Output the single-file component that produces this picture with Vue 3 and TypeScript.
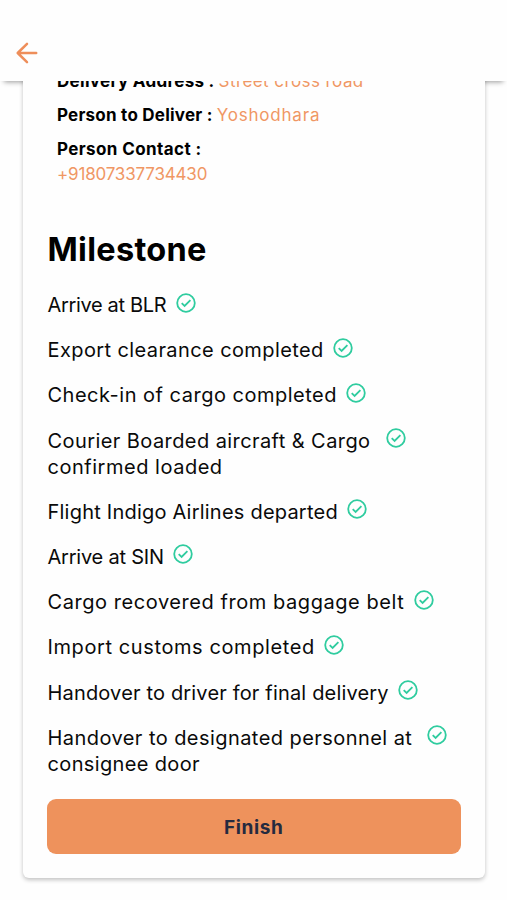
<script setup lang="ts">
interface Line {
  text: string
  tracking: number
}

interface Detail {
  label: Line
  value: Line
  stacked?: boolean
}

interface Milestone {
  lines: Line[]
  wide?: boolean
}

const details: Detail[] = [
  { label: { text: 'Delivery Address :', tracking: 0.3 }, value: { text: 'Street cross road', tracking: 0.42 } },
  { label: { text: 'Person to Deliver :', tracking: 0.23 }, value: { text: 'Yoshodhara', tracking: 0.8 } },
  {
    label: { text: 'Person Contact :', tracking: 0.4 },
    value: { text: '+91807337734430', tracking: -0.18 },
    stacked: true,
  },
]

const milestones: Milestone[] = [
  { lines: [{ text: 'Arrive at BLR', tracking: -0.34 }] },
  { lines: [{ text: 'Export clearance completed', tracking: 0.4 }] },
  { lines: [{ text: 'Check-in of cargo completed', tracking: 0.5 }] },
  {
    lines: [
      { text: 'Courier Boarded aircraft & Cargo', tracking: 0.42 },
      { text: 'confirmed loaded', tracking: 0.52 },
    ],
    wide: true,
  },
  { lines: [{ text: 'Flight Indigo Airlines departed', tracking: 0.22 }] },
  { lines: [{ text: 'Arrive at SIN', tracking: -0.22 }] },
  { lines: [{ text: 'Cargo recovered from baggage belt', tracking: 0.56 }] },
  { lines: [{ text: 'Import customs completed', tracking: 0.6 }] },
  { lines: [{ text: 'Handover to driver for final delivery', tracking: 0.17 }] },
  {
    lines: [
      { text: 'Handover to designated personnel at', tracking: 0.44 },
      { text: 'consignee door', tracking: 0.36 },
    ],
    wide: true,
  },
]
</script>

<template>
  <div class="screen">
    <header class="bar">
      <button class="back" aria-label="Back">
        <svg viewBox="0 0 24 24" width="24" height="24">
          <path d="M21.2 12H3M12 2.8L2.7 12L12 21.2" />
        </svg>
      </button>
    </header>

    <main class="scroll">
      <section class="card">
        <div class="details">
          <div v-for="d in details" :key="d.label.text" class="detail" :class="{ stacked: d.stacked }">
            <b :style="{ letterSpacing: d.label.tracking + 'px' }">{{ d.label.text }}</b>
            <span class="value" :style="{ letterSpacing: d.value.tracking + 'px' }">{{ d.value.text }}</span>
          </div>
        </div>

        <h1>Milestone</h1>

        <ul class="list">
          <li v-for="m in milestones" :key="m.lines[0].text" :class="{ wide: m.wide }">
            <div>
              <div
                v-for="line in m.lines"
                :key="line.text"
                class="line"
                :style="{ letterSpacing: line.tracking + 'px' }"
              >{{ line.text }}</div>
            </div>
            <svg class="check" viewBox="0 0 20 20" width="20" height="20">
              <circle cx="10" cy="10" r="8.8" />
              <path d="M5.7 10.2L8.6 13L14.4 7.2" />
            </svg>
          </li>
        </ul>

        <button class="finish">Finish</button>
      </section>
    </main>
  </div>
</template>

<style>
body {
  background: #fefefe;
}
</style>

<style scoped>
.screen {
  height: 900px;
  display: flex;
  flex-direction: column;
  overflow: hidden;
  background: #fefefe;
  color: #0a0a0a;
  font-family: Inter, "Liberation Sans", sans-serif;
}

.bar {
  flex: none;
  box-sizing: border-box;
  height: 81px;
  padding: 41px 0 0 15px;
  background: #fefefe;
  box-shadow: 0 5px 5px -4px rgba(0, 0, 0, 0.4);
}

.back {
  display: block;
  padding: 0;
  border: 0;
  background: none;
}

.back svg {
  display: block;
  fill: none;
  stroke: #ee8e5a;
  stroke-width: 2.5;
  stroke-linecap: round;
  stroke-linejoin: round;
}

.scroll {
  flex: 1;
  min-height: 0;
  overflow: hidden;
  position: relative;
}

.card {
  box-sizing: border-box;
  height: 827px;
  margin: -30px 22px 0 23px;
  padding: 18px 24.5px 24.5px;
  display: flex;
  flex-direction: column;
  border-radius: 6px;
  background: #fefefe;
  box-shadow: 0 2px 4px rgba(0, 0, 0, 0.24);
}

.details {
  display: flex;
  flex-direction: column;
  gap: 9.5px;
  padding-left: 9.5px;
  font-size: 17px;
  line-height: 24.5px;
  white-space: nowrap;
}

.detail {
  display: flex;
  gap: 4px;
}

.detail.stacked {
  flex-direction: column;
  gap: 0;
}

.detail b {
  font-weight: 700;
  color: #000;
}

.value {
  color: #f09764;
}

h1 {
  margin: 41.5px 0 0;
  font-size: 32.5px;
  line-height: 44px;
  font-weight: 700;
  letter-spacing: 0.3px;
  color: #000;
}

.list {
  margin: 21.5px 0 0;
  padding: 0;
  list-style: none;
  display: flex;
  flex-direction: column;
  gap: 19.45px;
}

.list li {
  display: flex;
  align-items: flex-start;
  gap: 9.5px;
  font-size: 20px;
  line-height: 25.8px;
  white-space: nowrap;
}

.list li.wide {
  gap: 15px;
}

.check {
  flex: none;
  margin-top: -0.5px;
  fill: none;
  stroke: #2fcc9f;
  stroke-width: 1.8;
}

.finish {
  margin: auto 0 0 -0.5px;
  height: 55px;
  padding: 2px 0 0;
  border: 0;
  border-radius: 9px;
  background: #ee925c;
  color: #252a3f;
  font: 700 19px/53px Inter, "Liberation Sans", sans-serif;
  letter-spacing: 0.6px;
}
</style>
